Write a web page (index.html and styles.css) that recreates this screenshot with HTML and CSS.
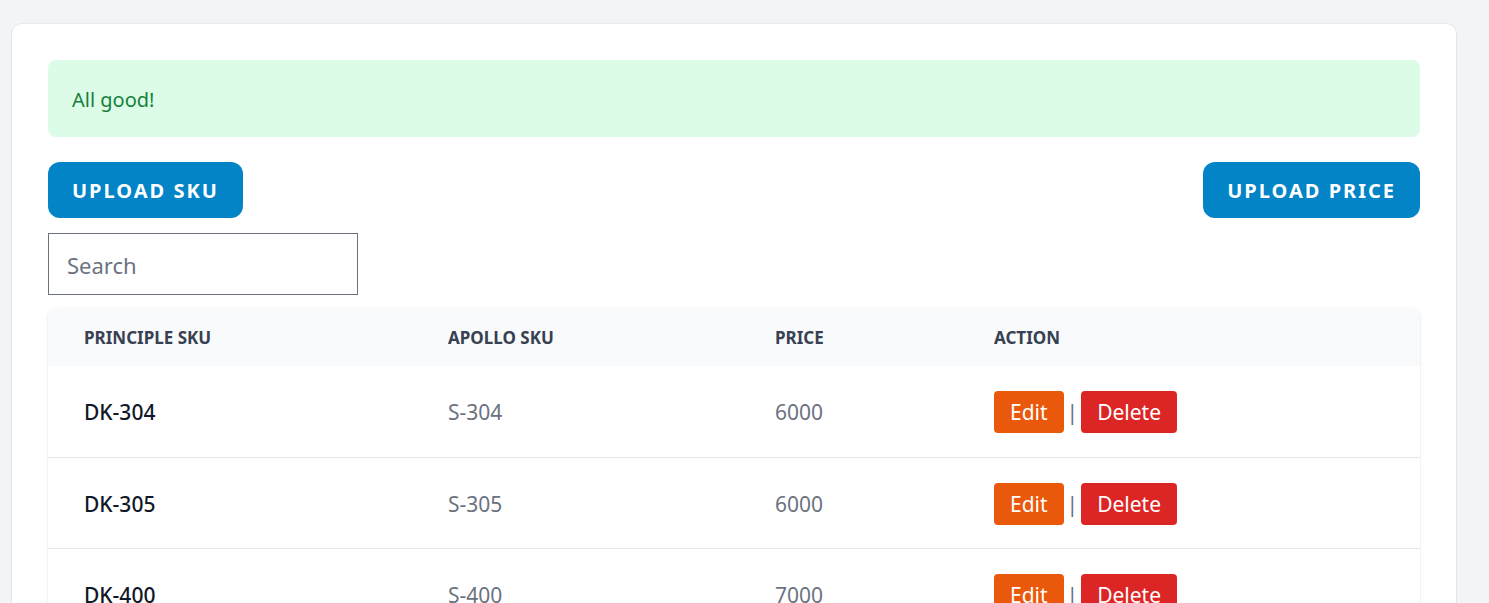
FILE: index.html
```html
<!DOCTYPE html>
<html>
<head>
<meta charset="utf-8">
<link rel="stylesheet" href="styles.css">
</head>
<body>
<div class="card">
  <div class="alert">All good!</div>
  <div class="toolbar">
    <button class="btn-upload">UPLOAD SKU</button>
    <button class="btn-upload">UPLOAD PRICE</button>
  </div>
  <input class="search" type="text" placeholder="Search">
  <div class="table-wrap">
    <table class="table">
      <thead>
        <tr>
          <th class="c1">PRINCIPLE SKU</th>
          <th class="c2">APOLLO SKU</th>
          <th class="c3">PRICE</th>
          <th class="c4">ACTION</th>
        </tr>
      </thead>
      <tbody>
        <tr>
          <td class="sku">DK-304</td>
          <td class="muted">S-304</td>
          <td class="muted">6000</td>
          <td><div class="actions"><button class="btn-edit">Edit</button><span class="sep">|</span><button class="btn-delete">Delete</button></div></td>
        </tr>
        <tr>
          <td class="sku">DK-305</td>
          <td class="muted">S-305</td>
          <td class="muted">6000</td>
          <td><div class="actions"><button class="btn-edit">Edit</button><span class="sep">|</span><button class="btn-delete">Delete</button></div></td>
        </tr>
        <tr>
          <td class="sku">DK-400</td>
          <td class="muted">S-400</td>
          <td class="muted">7000</td>
          <td><div class="actions"><button class="btn-edit">Edit</button><span class="sep">|</span><button class="btn-delete">Delete</button></div></td>
        </tr>
      </tbody>
    </table>
  </div>
</div>
</body>
</html>
```
FILE: styles.css
```css
* { box-sizing: border-box; }
html, body { margin: 0; padding: 0; }
body {
  background: #f3f4f6;
  font-family: "Noto Sans", "Open Sans", sans-serif;
  padding: 24px 33px 0 12px;
  overflow: hidden;
}
.card {
  background: #fff;
  border-radius: 10px;
  box-shadow: 0 1px 3px rgba(0,0,0,0.08), 0 0 0 1px rgba(0,0,0,0.03);
  padding: 36px 36px 0 36px;
}
.alert {
  background: #dcfce7;
  color: #15803d;
  border-radius: 8px;
  padding: 25px 24px 23px;
  font-size: 20px;
  line-height: 29px;
}
.toolbar {
  display: flex;
  justify-content: space-between;
  margin-top: 25px;
}
.btn-upload {
  background: #0284c7;
  color: #fff;
  border: none;
  border-radius: 12px;
  height: 56px;
  padding: 0 24px;
  font-family: inherit;
  font-weight: 700;
  font-size: 20px;
  letter-spacing: 2px;
}
.search {
  display: block;
  margin-top: 15px;
  width: 310px;
  height: 62px;
  border: 1px solid #6b7280;
  padding: 2px 18px 0;
  font-family: inherit;
  font-size: 22px;
  color: #111827;
  outline: none;
}
.search::placeholder { color: #6b7280; }
.table-wrap {
  margin-top: 13px;
  border-radius: 8px 8px 0 0;
  box-shadow: 0 1px 3px rgba(0,0,0,0.1), 0 1px 2px rgba(0,0,0,0.06);
  overflow: hidden;
}
.table {
  width: 100%;
  border-collapse: collapse;
}
.table th {
  background: #f9fafb;
  color: #374151;
  font-size: 17px;
  font-weight: 700;
  text-align: left;
  height: 58px;
  padding: 0 36px;
}
.c1 { width: 364px; }
.c2 { width: 327px; }
.c3 { width: 219px; }
.table td {
  padding: 25px 36px 23px;
  height: 91px;
  border-bottom: 1px solid #e5e7eb;
  font-size: 21px;
}
.sku { color: #111827; font-weight: 500; }
.muted { color: #6b7280; }
.actions {
  display: flex;
  align-items: center;
}
.sep {
  color: #6b7280;
  margin: 0 3px;
  font-size: 21px;
}
.btn-edit, .btn-delete {
  border: none;
  border-radius: 4px;
  color: #fff;
  font-family: inherit;
  font-size: 21px;
  height: 42px;
  padding: 0 16px;
}
.btn-edit { background: #ea580c; }
.btn-delete { background: #dc2626; }
```
